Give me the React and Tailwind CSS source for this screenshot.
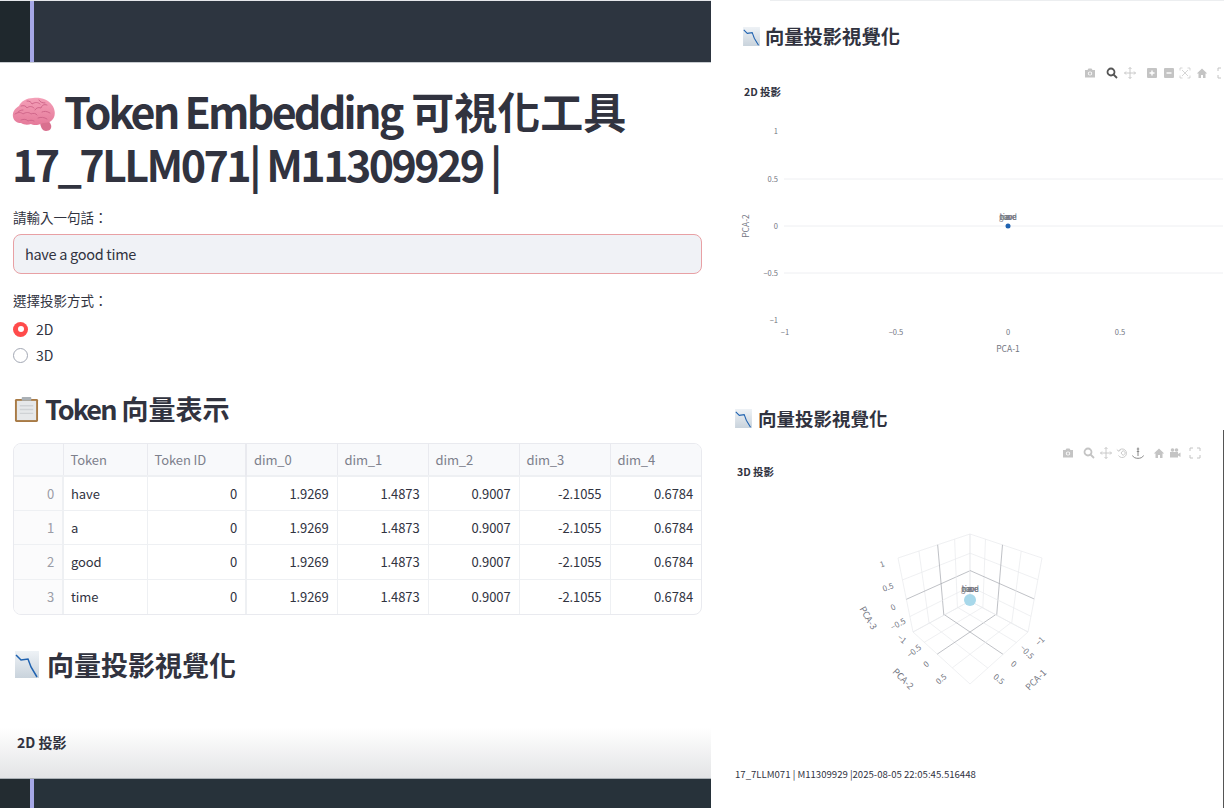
import React from "react";

const FONT = '"Noto Sans CJK TC", "Noto Sans", sans-serif';

const rows = [
  ["0", "have"],
  ["1", "a"],
  ["2", "good"],
  ["3", "time"],
];
const dims = ["1.9269", "1.4873", "0.9007", "-2.1055", "0.6784"];

function Brain({ className }) {
  return (
    <svg viewBox="0 0 44 36" className={className}>
      <defs>
        <linearGradient id="brainfill" x1="0" y1="0" x2="0" y2="1">
          <stop offset="0" stopColor="#f4a0b8" />
          <stop offset="1" stopColor="#e57a9a" />
        </linearGradient>
      </defs>
      <path d="M28 25c0 5 2 10 6 10 4 0 6-3 5-6-1-3-3-5-6-6z" fill="#d9708f" />
      <path d="M1 21C0 15 4 12 7 10 9 5 15 2 21 2c7-1 15 1 19 7 3 4 4 10 1 14-2 3-6 4-10 4-4 2-9 3-12 1-3 1-7 1-10-1-4 0-7-2-8-6z" fill="url(#brainfill)" />
      <g fill="none" stroke="#d0668a" strokeWidth="1" strokeLinecap="round">
        <path d="M9 10c3-1 5 0 6 2 2-2 5-2 7 0M15 5c3 0 4 1 5 3 3-2 6-2 8 0M27 4c1 2 3 3 6 3M35 9c-3-1-5 0-6 3-3-1-5 0-6 2" />
        <path d="M3 18c3-2 6-2 8 0 3-2 6-2 8 0 2-1 5-1 6 1M11 14c-2 0-4 1-5 2M30 16c2-1 5-1 8 1M26 22c3-1 6-1 9 1M9 24c3-1 5-1 7 1 2-1 4-1 6 0" />
      </g>
    </svg>
  );
}

function Clipboard({ className }) {
  return (
    <svg viewBox="0 0 26 28" className={className}>
      <rect x="1" y="3" width="24" height="24" rx="1.5" fill="#a87a45" />
      <rect x="3" y="5" width="20" height="20" fill="#e6e8ea" />
      <path d="M6 10h14M6 14h14M6 18h14" stroke="#cfd2d5" strokeWidth="1.5" />
      <rect x="8" y="1" width="10" height="4" rx="1" fill="#aab0b5" />
    </svg>
  );
}

function ChartDown({ className }) {
  return (
    <svg viewBox="0 0 24 27" className={className}>
      <defs>
        <linearGradient id="chartbg" x1="0" y1="0" x2="0" y2="1">
          <stop offset="0" stopColor="#eef2f6" />
          <stop offset="1" stopColor="#c9d3dc" />
        </linearGradient>
      </defs>
      <rect width="24" height="27" fill="url(#chartbg)" />
      <path d="M1 4l5 5 7-1 3 8 6 10" fill="none" stroke="#1f62b0" strokeWidth="1.5" />
    </svg>
  );
}

// plotly modebar glyphs
function ModeIcon({ name, active }) {
  const c = active ? "#555" : "#c4c4c4";
  const s = { fill: "none", stroke: c, strokeWidth: 1.3 };
  return (
    <svg viewBox="0 0 12 12" className="w-3 h-3 shrink-0">
      {name === "camera" && (
        <g>
          <path d="M1 3h2.500l1-1.500h3L8.500 3H11v7.500H1z" fill={c} />
          <circle cx="6" cy="6.500" r="2.100" fill="#fff" />
          <circle cx="6" cy="6.500" r="1.200" fill={c} />
        </g>
      )}
      {name === "zoom" && (
        <g {...s} strokeWidth={1.8}>
          <circle cx="5" cy="5" r="3.500" />
          <path d="M7.500 7.500L11 11" />
        </g>
      )}
      {name === "pan" && (
        <path d="M6 .5v11M.5 6h11M4.500 2L6 .5 7.500 2M4.500 10L6 11.500 7.500 10M2 4.500L.5 6 2 7.500M10 4.500L11.500 6 10 7.500" {...s} strokeWidth={0.9} />
      )}
      {name === "plus" && (
        <g>
          <rect x="1" y="1" width="10" height="10" rx="1" fill={c} />
          <path d="M6 3.500v5M3.500 6h5" stroke="#fff" strokeWidth="1.400" />
        </g>
      )}
      {name === "minus" && (
        <g>
          <rect x="1" y="1" width="10" height="10" rx="1" fill={c} />
          <path d="M3.500 6h5" stroke="#fff" strokeWidth="1.400" />
        </g>
      )}
      {name === "auto" && (
        <path d="M1 3.500V1h2.500M8.500 1H11v2.500M11 8.500V11H8.500M3.500 11H1V8.500M3 3l6 6M9 3l-6 6" {...s} strokeWidth={0.7} />
      )}
      {name === "home" && <path d="M6 1.500L.8 6.500h1.700V11h2.500V8h2v3h2.500V6.500h1.700z" fill={c} />}
      {name === "full" && (
        <path d="M1 4V1h3M8 1h3v3M11 8v3H8M4 11H1V8" {...s} strokeWidth={1} />
      )}
      {name === "orbit" && (
        <path d="M2.500 4a4.300 4.300 0 1 1 0 4.500M.8 2.500l1.700 1.700 2-1M5 6l2.200-2.500L9.500 6 7.200 8.500z" {...s} strokeWidth={0.9} />
      )}
      {name === "turn" && (
        <path d="M6 .5v8.500M4.800 2h2.400M4.800 4.500h2.400M.5 8.500c1 2.200 3.200 2.800 5.500 2.800s4.500-.6 5.500-2.800" {...s} stroke="#888" strokeWidth={1} />
      )}
      {name === "video" && (
        <g fill={c}>
          <circle cx="3.500" cy="3" r="1.800" />
          <circle cx="7.500" cy="3" r="1.800" />
          <rect x="1" y="5" width="8" height="5.500" />
          <path d="M9 7l2.500-1.500v4.500L9 8.500z" />
        </g>
      )}
    </svg>
  );
}

function Modebar({ items, className }) {
  return (
    <div className={"flex items-center " + className}>
      {items.map((it, i) => (
        <span key={i} className="shrink-0" style={{ marginLeft: it.gap }}>
          <ModeIcon name={it.name} active={it.active} />
        </span>
      ))}
    </div>
  );
}

const AXIS = "#72757f";

function Chart2D() {
  const ys = [
    [131, "1", false],
    [179, "0.5", true],
    [226, "0", true],
    [273, "−0.5", true],
    [320, "−1", false],
  ];
  const xs = [
    [786, "−1"],
    [897, "−0.5"],
    [1009, "0"],
    [1121, "0.5"],
  ];
  const ox = 730;
  const oy = 100;
  return (
    <svg width="494" height="260" viewBox={`${ox} ${oy} 494 260`} className="block" fontFamily={FONT}>
      {ys.map(([y, t, grid]) => (
        <g key={t}>
          {grid && <line x1="785" x2="1224" y1={y} y2={y} stroke="#eeeff2" />}
          <text x="779" y={y + 3} fontSize="7.500" textAnchor="end" fill={AXIS}>{t}</text>
        </g>
      ))}
      {xs.map(([x, t]) => (
        <text key={t} x={x} y="335" fontSize="7.500" textAnchor="middle" fill={AXIS}>{t}</text>
      ))}
      <text x="1009" y="352" fontSize="8.500" textAnchor="middle" fill={AXIS}>PCA-1</text>
      <text x="750" y="226" fontSize="8.500" textAnchor="middle" fill={AXIS} transform="rotate(-90 750 226)">PCA-2</text>
      <circle cx="1009" cy="226" r="2.500" fill="#1f62b0" />
      {["have", "a", "good", "time"].map((t) => (
        <text key={t} x="1009" y="220" fontSize="7.500" textAnchor="middle" fill={AXIS}>{t}</text>
      ))}
    </svg>
  );
}

// projective map of the unit square onto a quad, so the grid keeps its perspective
function homography([p0, p1, p2, p3]) {
  const [x0, y0] = p0;
  const [x1, y1] = p1;
  const [x2, y2] = p2;
  const [x3, y3] = p3;
  const dx1 = x1 - x2;
  const dx2 = x3 - x2;
  const sx = x0 - x1 + x2 - x3;
  const dy1 = y1 - y2;
  const dy2 = y3 - y2;
  const sy = y0 - y1 + y2 - y3;
  const den = dx1 * dy2 - dx2 * dy1;
  const g = (sx * dy2 - dx2 * sy) / den;
  const h = (dx1 * sy - sx * dy1) / den;
  const a = x1 - x0 + g * x1;
  const b = x3 - x0 + h * x3;
  const d = y1 - y0 + g * y1;
  const e = y3 - y0 + h * y3;
  return (u, v) => {
    const w = g * u + h * v + 1;
    return [(a * u + b * v + x0) / w, (d * u + e * v + y0) / w];
  };
}

function quadGrid(quad, n) {
  const at = homography(quad);
  const out = [];
  for (let i = 0; i <= n; i++) {
    const t = i / n;
    out.push([at(t, 0), at(t, 1), i]);
    out.push([at(0, t), at(1, t), i]);
  }
  return out;
}

function Chart3D() {
  const top = [971, 534];
  const leftTop = [899, 558];
  const rightTop = [1043, 558];
  const leftBot = [914, 632];
  const rightBot = [1029, 632];
  const back = [971, 601];
  const front = [971, 684];
  const quads = [
    [leftTop, top, back, leftBot],
    [top, rightTop, rightBot, back],
    [leftBot, back, rightBot, front],
  ];
  const ticks = [
    [883, 564, "1", -20],
    [889, 587, "0.5", -20],
    [894, 607, "0", -25],
    [899, 624, "−0.5", -30],
    [903, 639, "−1", 40],
    [915, 651, "−0.5", -40],
    [927, 664, "0", -40],
    [942, 679, "0.5", -40],
    [1000, 679, "0.5", 40],
    [1015, 664, "0", 40],
    [1028, 652, "−0.5", 45],
    [1041, 641, "−1", -45],
  ];
  return (
    <svg width="300" height="200" viewBox="850 510 300 200" className="block" fontFamily={FONT}>
      {quads.map((q, k) =>
        quadGrid(q, 4).map(([p, r, i], j) => (
          <line key={k + "-" + j} x1={p[0]} y1={p[1]} x2={r[0]} y2={r[1]} stroke={i === 2 ? "#a4a6ae" : "#e8e9ec"} strokeWidth="0.700" />
        ))
      )}
      {ticks.map(([x, y, t, r], i) => (
        <text key={i} x={x} y={y + 3} fontSize="8" textAnchor="middle" fill={AXIS} transform={`rotate(${r} ${x} ${y})`}>{t}</text>
      ))}
      <text x="869" y="621" fontSize="9" textAnchor="middle" fill={AXIS} transform="rotate(60 869 618)">PCA-3</text>
      <text x="904" y="682" fontSize="9" textAnchor="middle" fill={AXIS} transform="rotate(45 904 679)">PCA-2</text>
      <text x="1037" y="683" fontSize="9" textAnchor="middle" fill={AXIS} transform="rotate(-45 1037 680)">PCA-1</text>
      <circle cx="971" cy="600" r="6" fill="#a8d8ea" />
      {["have", "a", "good", "time"].map((t) => (
        <text key={t} x="971" y="592" fontSize="7.500" textAnchor="middle" fill={AXIS}>{t}</text>
      ))}
    </svg>
  );
}

function Bar({ main, side }) {
  return (
    <div className={"flex h-full " + main}>
      <div className={"w-[30px] " + side} />
      <div className="w-[4px] bg-[#a5a7e6]" />
    </div>
  );
}

export default function App() {
  return (
    <div className="flex w-[1224px] h-[808px] overflow-hidden bg-white text-[#31333f]" style={{ fontFamily: FONT }}>
      {/* left screenshot */}
      <div className="flex flex-col w-[711px] shrink-0">
        <div className="h-[63px] shrink-0 bg-[#2d3540] border-t border-t-[#e5e7eb] border-b border-b-[#c8ccd0]">
          <Bar main="bg-[#2d3540]" side="bg-[#1f282d]" />
        </div>
        <div className="flex-1 min-h-0 px-[13px] relative overflow-hidden">
          <h1 className="mt-[21px] text-[43px] leading-[53px] font-bold">
            <Brain className="inline-block w-[44px] h-[36px] mr-[8px] align-[-3px] -ml-[1px]" />
            <span className="tracking-[-2.800px]">Token Embedding</span> 可視化工具
            <br />
            <span className="tracking-[-2.600px] ml-[-1px]">17_7LLM071| M11309929 |</span>
          </h1>
          <div className="mt-[17px] text-[13.500px] leading-[20px]">請輸入一句話：</div>
          <div className="mt-[7px] h-[40px] w-[689px] rounded-lg border border-[#e8a0a4] bg-[#f0f2f6] px-[11px] pb-[1px] flex items-center text-[14.500px] tracking-[-0.300px]">
            have a good time
          </div>
          <div className="mt-[16px] text-[13.500px] leading-[20px]">選擇投影方式：</div>
          <div className="mt-[10px] flex flex-col gap-[8px]">
            <div className="flex items-center gap-[8px] h-[18px] text-[14px]">
              <span className="w-[15px] h-[15px] rounded-full bg-[#ff4b4b] flex items-center justify-center">
                <span className="w-[6px] h-[6px] rounded-full bg-white" />
              </span>
              2D
            </div>
            <div className="flex items-center gap-[8px] h-[18px] text-[14px]">
              <span className="w-[15px] h-[15px] rounded-full border border-[#a3a8b4] bg-white" />
              3D
            </div>
          </div>
          <h2 className="mt-[27px] flex items-center text-[27px] leading-[36px] font-semibold">
            <Clipboard className="w-[25px] h-[27px] mr-[6px] ml-[1px]" />
            <span className="tracking-[-1.900px] mr-[6px]">Token</span>向量表示
          </h2>
          <div className="mt-[16px] w-[689px] rounded-lg border border-[#e9eaef] overflow-hidden">
            <table className="w-full table-fixed border-collapse text-[13px] tracking-[-0.100px]">
              <colgroup>
                <col className="w-[49px]" />
                <col className="w-[84px]" />
                <col className="w-[99px]" />
                <col className="w-[91px]" />
                <col className="w-[91px]" />
                <col className="w-[91px]" />
                <col className="w-[91px]" />
              </colgroup>
              <thead>
                <tr className="h-[32px] bg-[#f8f9fb] text-[#7d808c] text-left border-b-2 border-[#eef0f3]">
                  <th className="font-normal" />
                  {["Token", "Token ID", "dim_0", "dim_1", "dim_2", "dim_3", "dim_4"].map((h) => (
                    <th key={h} className={"font-normal px-[7px] border-[#e9eaef] " + (h === "dim_0" ? "border-l-2" : "border-l")}>{h}</th>
                  ))}
                </tr>
              </thead>
              <tbody>
                {rows.map(([i, t]) => (
                  <tr key={i} className="h-[34.400px] border-t border-[#eef0f3]">
                    <td className="px-[8px] text-right text-[#9a9ca6] bg-[#fbfbfc]">{i}</td>
                    <td className="px-[7px] border-l-2 border-[#eef0f3]">{t}</td>
                    <td className="px-[8px] text-right border-l border-[#eef0f3]">0</td>
                    {dims.map((d, k) => (
                      <td key={k} className={"px-[8px] text-right border-l " + (k === 0 ? "border-l-2 " : "") + "border-[#eef0f3]"}>{d}</td>
                    ))}
                  </tr>
                ))}
              </tbody>
            </table>
          </div>
          <h2 className="mt-[30px] flex items-center text-[27px] leading-[40px] font-semibold">
            <ChartDown className="w-[24px] h-[27px] mr-[8px] ml-[2px]" />
            向量投影視覺化
          </h2>
          <div className="mt-[47px] ml-[4px] text-[14px] font-bold leading-[20px] relative z-10">2D 投影</div>
          <div className="absolute left-0 right-0 bottom-0 h-[50px] bg-gradient-to-b from-white/0 to-[#e3e4e6]" />
        </div>
        <div className="h-[30px] shrink-0 border-t border-t-[#aab0b5]">
          <Bar main="bg-[#27323a]" side="bg-[#232c31]" />
        </div>
      </div>

      {/* right screenshot */}
      <div className="flex-1 min-w-0 relative overflow-hidden">
        <div className="h-[2px] ml-[59px] border-t border-[#eceef0]" />
        <h3 className="mt-[22px] ml-[32px] flex items-center text-[19.300px] leading-[24px] font-semibold">
          <ChartDown className="w-[17px] h-[19px] mr-[5px]" />
          向量投影視覺化
        </h3>
        <Modebar
          className="mt-[19px] ml-[373px]"
          items={[
            { name: "camera", gap: 0 },
            { name: "zoom", active: true, gap: 10 },
            { name: "pan", gap: 6 },
            { name: "plus", gap: 10 },
            { name: "minus", gap: 5 },
            { name: "auto", gap: 4 },
            { name: "home", gap: 5 },
            { name: "full", gap: 9 },
          ]}
        />
        <div className="mt-[6px] ml-[33px] text-[10.500px] leading-[14px] font-bold">2D 投影</div>
        <div className="mt-[1px] ml-[18px]">
          <Chart2D />
        </div>
        <h3 className="mt-[46px] ml-[24px] flex items-center text-[18.500px] leading-[24px] font-semibold">
          <ChartDown className="w-[17px] h-[19px] mr-[6px]" />
          向量投影視覺化
        </h3>
        <Modebar
          className="mt-[17px] ml-[351px]"
          items={[
            { name: "camera", gap: 0 },
            { name: "zoom", gap: 9 },
            { name: "pan", gap: 5 },
            { name: "orbit", gap: 4 },
            { name: "turn", gap: 4 },
            { name: "home", gap: 9 },
            { name: "video", gap: 4 },
            { name: "full", gap: 8 },
          ]}
        />
        <div className="mt-[6px] ml-[26px] text-[10.500px] leading-[14px] font-bold">3D 投影</div>
        <div className="mt-[31px] ml-[138px]">
          <Chart3D />
        </div>
        <div className="mt-[57px] ml-[24px] text-[9.600px] leading-[14px] whitespace-nowrap">17_7LLM071 | M11309929 |2025-08-05 22:05:45.516448</div>
        <div className="absolute right-0 top-[430px] bottom-0 w-px bg-[#555]" />
      </div>
    </div>
  );
}
